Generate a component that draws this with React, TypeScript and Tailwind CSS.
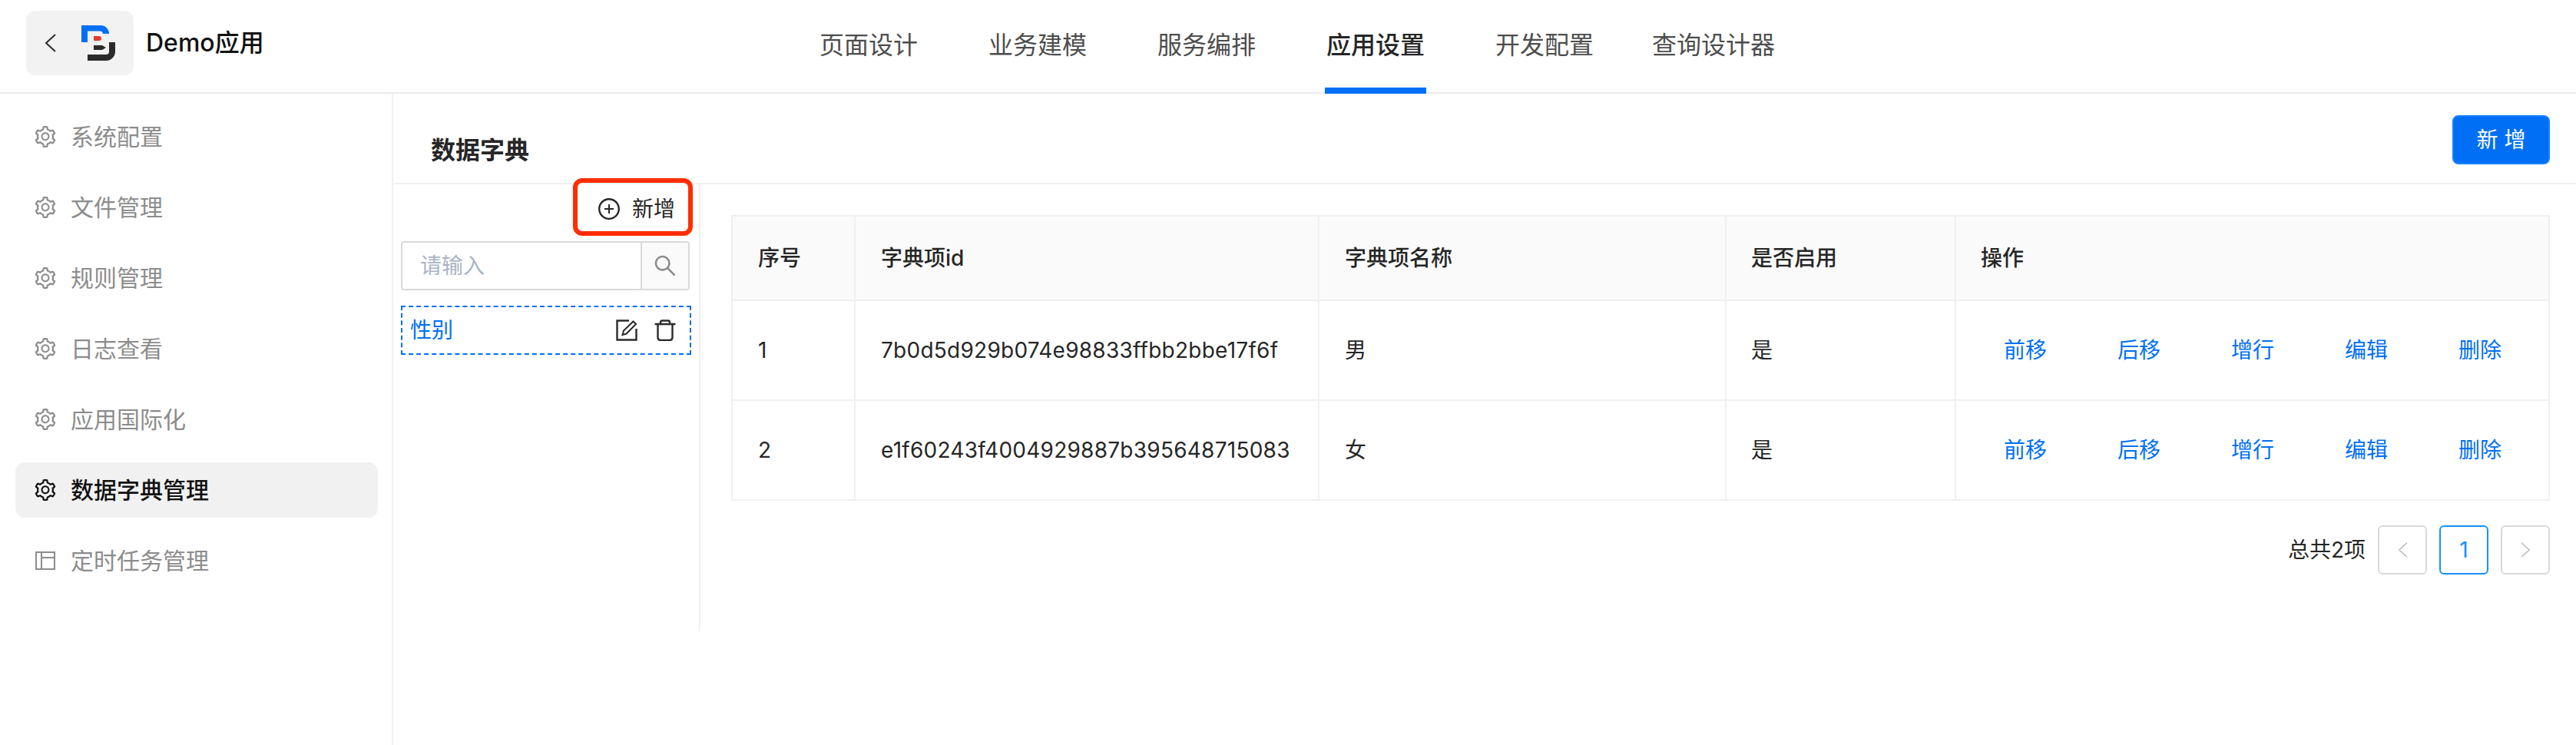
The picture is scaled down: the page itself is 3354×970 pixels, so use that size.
import React from "react";
import { AiOutlineSetting, AiOutlineSearch, AiOutlinePlusCircle } from "react-icons/ai";

const navItems = ["页面设计", "业务建模", "服务编排", "应用设置", "开发配置", "查询设计器"];
const sideItems = ["系统配置", "文件管理", "规则管理", "日志查看", "应用国际化", "数据字典管理", "定时任务管理"];
const actions = ["前移", "后移", "增行", "编辑", "删除"];
const rows = [
  { no: 1, id: "7b0d5d929b074e98833ffbb2bbe17f6f", name: "男" },
  { no: 2, id: "e1f60243f4004929887b395648715083", name: "女" },
];

const Logo = () => (
  <svg viewBox="106 33 44 46" className="w-[44px] h-[46px]">
    <path fill="#006ff5" d="M106 33H131A11 11 0 0 1 142 44H134A4 4 0 0 0 130 40.5H114V55H106Z" />
    <path fill="#2b2b2b" d="M142 55H150V67A12 12 0 0 1 138 79H114V71H138A4 4 0 0 0 142 67Z" />
    <path fill="#e03c31" d="M122 47H129Q132 47 132 50Q132 53 129 53H122Z" />
    <path fill="#2b2b2b" d="M122 59H133L138 62L133 65H122Z" />
  </svg>
);

const LayoutIcon = () => (
  <svg viewBox="0 0 28 28" className="w-7 h-7 shrink-0" fill="none" stroke="currentColor" strokeWidth="2">
    <path d="M2 3H26V25H2ZM9 3V25M9 10H26" />
  </svg>
);

const EditIcon = () => (
  <svg viewBox="0 0 28 28" className="w-7 h-7" fill="none" stroke="#2b2b2b" strokeWidth="2.4">
    <path d="M17 1.5H1.5V26.5H26.5V12" />
    <path d="M8.5 20L10 14.5L22.5 2.5L26 6L13.5 18.5Z" strokeWidth="2" />
  </svg>
);

const TrashIcon = () => (
  <svg viewBox="0 0 28 28" className="w-7 h-7" fill="none" stroke="#2b2b2b" strokeWidth="2.4" strokeLinecap="round">
    <path d="M1.5 6H26.5" />
    <path d="M8 6V3.5Q8 1.5 10 1.5H18Q20 1.5 20 3.5V6" />
    <path d="M4.5 6V23Q4.5 27 8.5 27H19.5Q23.5 27 23.5 23V6" />
  </svg>
);

const ChevronLeft = ({ className }: { className: string }) => (
  <svg viewBox="0 0 15 24" className={className} fill="none" stroke="currentColor" strokeWidth="2">
    <path d="M14 1L2 12L14 23" />
  </svg>
);

const ChevronRight = ({ className }: { className: string }) => (
  <svg viewBox="0 0 15 24" className={className} fill="none" stroke="currentColor" strokeWidth="2">
    <path d="M1 1L13 12L1 23" />
  </svg>
);

const App = () => {
  return (
    <div className="flex flex-col w-full h-[970px] bg-white text-[28px] text-[#262626] font-['Inter','Noto_Sans_CJK_SC',sans-serif]">
      {/* Header */}
      <div className="flex h-[122px] border-b-2 border-[#e9ebee]">
        <div className="flex w-[1063px] shrink-0 items-center self-start h-[84px] mt-[14px] pl-[34px]">
          <div className="flex items-center w-[140px] h-[84px] rounded-xl bg-[#f2f2f2] pl-6">
            <ChevronLeft className="w-[15px] h-[24px] text-[#2b2b2b]" />
            <div className="ml-[33px]"><Logo /></div>
          </div>
          <span className="ml-[16px] text-[32px] font-medium text-[#111]">Demo应用</span>
        </div>
        <div className="flex h-[122px] gap-[84px] self-start">
          {navItems.map((item, i) => (
            <div
              key={item}
              className={
                item === "应用设置"
                  ? "flex items-center h-full mx-[2px] px-[2px] pt-1 border-b-[8px] border-[#006ff5] text-[32px] font-medium text-[#262626]"
                  : i === 5
                  ? "flex items-center h-full -ml-4 px-1 pt-1 border-b-[8px] border-transparent text-[32px] text-[#4d4d4d]"
                  : "flex items-center h-full px-1 pt-1 border-b-[8px] border-transparent text-[32px] text-[#4d4d4d]"
              }
            >
              {item}
            </div>
          ))}
        </div>
      </div>

      <div className="flex flex-1">
        {/* Sidebar */}
        <div className="flex flex-col gap-5 w-[512px] shrink-0 border-r-2 border-[#eff0f3] pl-5 pr-[18px] pt-5">
          {sideItems.map((item, i) => (
            <div
              key={item}
              className={
                i === 5
                  ? "flex items-center gap-[19px] h-[72px] pl-[25px] rounded-xl bg-[#f1f1f1] text-[30px] font-medium text-[#111]"
                  : "flex items-center gap-[19px] h-[72px] pl-[25px] rounded-xl text-[30px] text-[#8c8c8c]"
              }
            >
              {i === 6 ? <LayoutIcon /> : <AiOutlineSetting className="w-8 h-8 -mx-[2px] shrink-0" />}
              {item}
            </div>
          ))}
        </div>

        <div className="flex flex-col flex-1">
          {/* Title bar */}
          <div className="flex justify-between h-[118px] border-b-2 border-[#eff0f3] pl-[49px] pr-[34px] pt-7">
            <div className="mt-[30px] text-[32px] leading-8 font-semibold text-[#262626]">数据字典</div>
            <button className="w-[127px] h-[64px] rounded-lg bg-[#006ff5] border-2 border-[#1480fa] text-white text-[28px]">
              新 增
            </button>
          </div>

          <div className="flex flex-1">
            {/* Dictionary list */}
            <div className="relative w-[400px] h-[582px] shrink-0 border-r-2 border-[#eff0f3] pl-[10px]">
              <div className="absolute left-[234px] -top-2 w-[156px] h-[75px] rounded-xl border-[6px] border-[#ff2d00]" />
              <div className="flex items-center justify-end gap-[14px] h-[74px] pr-[31px] pb-[10px]">
                <AiOutlinePlusCircle className="w-8 h-8" />
                <span>新增</span>
              </div>
              <div className="flex w-[376px] h-[64px] rounded border-2 border-[#d9d9d9]">
                <div className="flex flex-1 items-center pl-[23px] text-[#a9b4c5]">请输入</div>
                <div className="flex items-center justify-center w-[62px] border-l-2 border-[#d9d9d9] bg-[#fafafa]">
                  <AiOutlineSearch className="w-[34px] h-[34px] text-[#8c8c8c]" />
                </div>
              </div>
              <div className="flex items-center justify-between w-[378px] h-[64px] mt-5 pl-[10px] pr-[18px] border-2 border-dashed border-[#006ff5]">
                <span className="text-[#006ff5]">性别</span>
                <div className="flex gap-[22px]">
                  <EditIcon />
                  <TrashIcon />
                </div>
              </div>
            </div>

            {/* Table */}
            <div className="flex-1 pl-[40px] pr-[34px] pt-10">
              <table className="w-full table-fixed border-collapse text-left">
                <thead>
                  <tr className="h-[110px] bg-[#fafafa]">
                    <th className="w-[160px] border-2 border-[#f0f0f0] pl-[33px] font-medium">序号</th>
                    <th className="w-[604px] border-2 border-[#f0f0f0] pl-[33px] font-medium">字典项id</th>
                    <th className="w-[530px] border-2 border-[#f0f0f0] pl-[33px] font-medium">字典项名称</th>
                    <th className="w-[299px] border-2 border-[#f0f0f0] pl-[32px] font-medium">是否启用</th>
                    <th className="border-2 border-[#f0f0f0] pl-[32px] font-medium">操作</th>
                  </tr>
                </thead>
                <tbody>
                  {rows.map((row) => (
                    <tr key={row.no} className="h-[130px]">
                      <td className="border-2 border-[#f0f0f0] pl-[33px]">{row.no}</td>
                      <td className="border-2 border-[#f0f0f0] pl-[33px] tracking-[0.25px]">{row.id}</td>
                      <td className="border-2 border-[#f0f0f0] pl-[33px]">{row.name}</td>
                      <td className="border-2 border-[#f0f0f0] pl-[32px]">是</td>
                      <td className="border-2 border-[#f0f0f0] pl-[62px]">
                        <div className="flex gap-[92px] text-[#006ff5]">
                          {actions.map((a) => (
                            <span key={a}>{a}</span>
                          ))}
                        </div>
                      </td>
                    </tr>
                  ))}
                </tbody>
              </table>

              {/* Pagination */}
              <div className="flex items-center justify-end gap-4 mt-8">
                <span>总共2项</span>
                <div className="flex items-center justify-center w-16 h-16 rounded-md border-2 border-[#d9d9d9] text-[#bfbfbf]">
                  <ChevronLeft className="w-[13px] h-[20px]" />
                </div>
                <div className="flex items-center justify-center w-16 h-16 rounded-md border-2 border-[#1890ff] text-[#1890ff]">1</div>
                <div className="flex items-center justify-center w-16 h-16 rounded-md border-2 border-[#d9d9d9] text-[#bfbfbf]">
                  <ChevronRight className="w-[13px] h-[20px]" />
                </div>
              </div>
            </div>
          </div>
        </div>
      </div>
    </div>
  );
};

export default App;
